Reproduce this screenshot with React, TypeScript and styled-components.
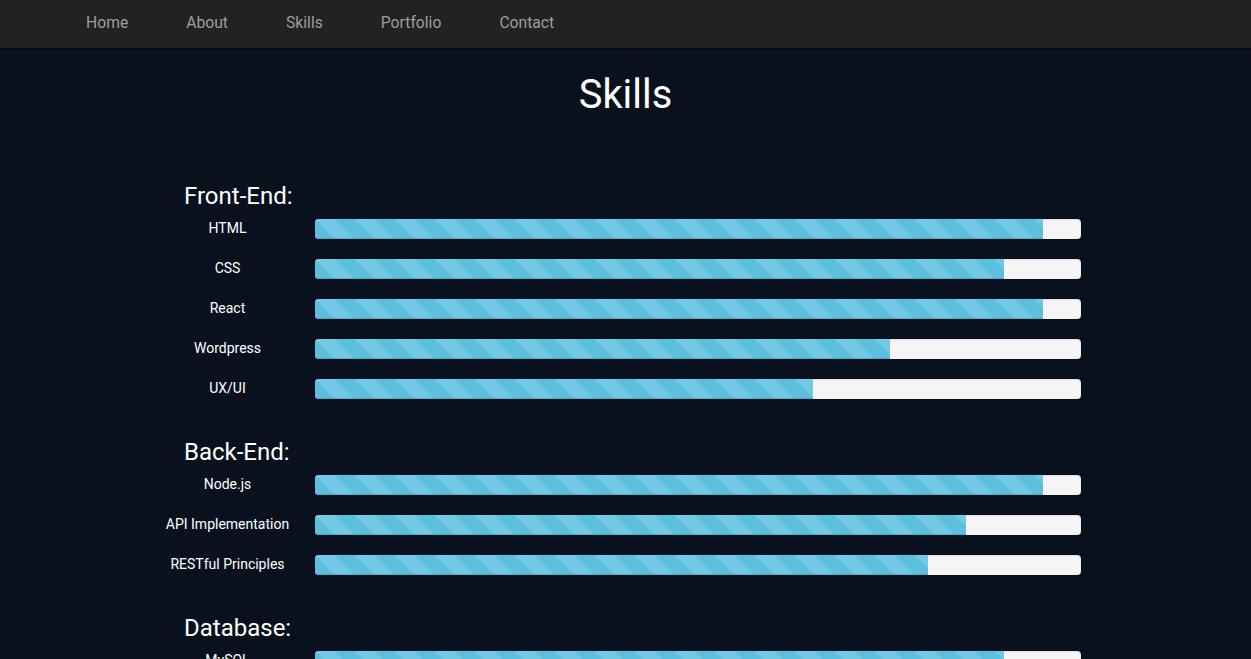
import React from "react";
import styled, { createGlobalStyle } from "styled-components";

const Global = createGlobalStyle`
  html, body { margin: 0; padding: 0; }
  body {
    background: #09111e;
    font-family: Roboto, "Liberation Sans", Arial, sans-serif;
    color: #fff;
  }
`;

const NavBar = styled.nav`
  height: 48px;
  background: #222222;
  border-bottom: 1px solid #080808;
  display: flex;
  align-items: center;
  padding-left: 57px;
`;

const NavLink = styled.a`
  color: #9d9d9d;
  font-size: 15.7px;
  padding: 0 29px;
  text-decoration: none;
  line-height: 20px;
  margin-top: -2px;
`;

const Title = styled.h1`
  margin: 24px 0 0;
  font-size: 39.8px;
  font-weight: 400;
  line-height: 44px;
  text-align: center;
  color: #fff;
`;

const Content = styled.div`
  width: 931px;
  padding-right: 20px;
  margin: 66px auto 0;
`;

const Section = styled.section`
  padding-bottom: 20px;
`;

const Heading = styled.h2`
  margin: 0 0 10px 34px;
  font-size: 24px;
  font-weight: 400;
  line-height: 26px;
  color: #fff;
`;

const Row = styled.div`
  display: flex;
  align-items: center;
  gap: 10px;
  margin-bottom: 20px;
`;

const Label = styled.div`
  width: 155px;
  text-align: center;
  font-size: 14px;
  line-height: 18px;
  margin-top: -2px;
  color: #fff;
`;

const Track = styled.div`
  flex: 1;
  height: 20px;
  background: #f5f5f5;
  border-radius: 4px;
  overflow: hidden;
  box-shadow: inset 0 1px 2px rgba(0, 0, 0, 0.1);
  display: flex;
`;

const Fill = styled.div`
  height: 100%;
  background-color: #5bc0de;
  background-image: linear-gradient(
    45deg,
    rgba(255, 255, 255, 0.15) 25%,
    transparent 25%,
    transparent 50%,
    rgba(255, 255, 255, 0.15) 50%,
    rgba(255, 255, 255, 0.15) 75%,
    transparent 75%,
    transparent
  );
  background-size: 40px 40px;
  box-shadow: inset 0 -1px 0 rgba(0, 0, 0, 0.15);
`;

const sections: { title: string; skills: [string, number][] }[] = [
  {
    title: "Front-End:",
    skills: [
      ["HTML", 95],
      ["CSS", 90],
      ["React", 95],
      ["Wordpress", 75],
      ["UX/UI", 65],
    ],
  },
  {
    title: "Back-End:",
    skills: [
      ["Node.js", 95],
      ["API Implementation", 85],
      ["RESTful Principles", 80],
    ],
  },
  {
    title: "Database:",
    skills: [["MySQL", 90]],
  },
];

export default function App() {
  return (
    <>
      <Global />
      <NavBar>
        {["Home", "About", "Skills", "Portfolio", "Contact"].map((n) => (
          <NavLink key={n} href="#">
            {n}
          </NavLink>
        ))}
      </NavBar>
      <Title>Skills</Title>
      <Content>
        {sections.map((s) => (
          <Section key={s.title}>
            <Heading>{s.title}</Heading>
            {s.skills.map(([name, pct]) => (
              <Row key={name}>
                <Label>{name}</Label>
                <Track>
                  <Fill style={{ width: `${pct}%` }} />
                </Track>
              </Row>
            ))}
          </Section>
        ))}
      </Content>
    </>
  );
}
